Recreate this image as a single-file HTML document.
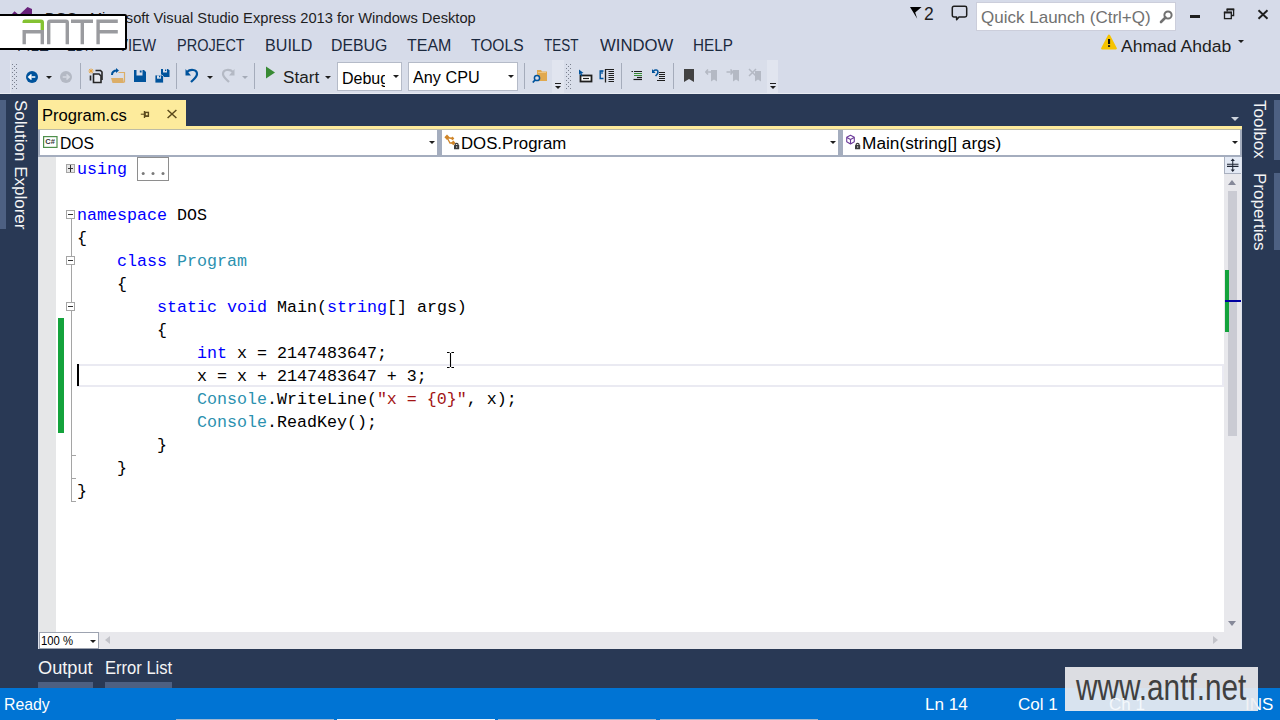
<!DOCTYPE html>
<html><head><meta charset="utf-8">
<style>
*{margin:0;padding:0;box-sizing:border-box}
html,body{width:1280px;height:720px;overflow:hidden;background:#D6DBE9;font-family:"Liberation Sans",sans-serif;position:relative}
.a{position:absolute;white-space:nowrap;line-height:1}
.t{font-size:15px;color:#1E1E1E}
.m{font-size:15px;color:#1B293E;top:39px}
.code{font-family:"Liberation Mono",monospace;font-size:16.67px;line-height:23px;color:#000;white-space:pre}
.kw{color:#0000FF}
.ty{color:#2B91AF}
.st{color:#A31515}
.sep{position:absolute;width:1px;background:#A5ACBB;top:63px;height:26px}
.dd{position:absolute;width:0;height:0;border-left:3px solid transparent;border-right:3px solid transparent;border-top:3px solid #1E1E1E}
.vt{position:absolute;font-size:16px;color:#F5F5F5;line-height:20px;transform-origin:0 0;transform:rotate(90deg);white-space:nowrap}
.ob{position:absolute;left:66px;width:9px;height:9px;border:1px solid #A5A5A5;background:#fff}
.ob:after{content:"";position:absolute;left:1px;top:3px;width:5px;height:1px;background:#333}
</style></head><body>

<!-- ===== TITLE BAR ===== -->
<svg class="a" style="left:10px;top:5px" width="24" height="24" viewBox="0 0 24 24"><path d="M2 9 L4.5 6.3 L9 10 L17.5 2 L22 4 L22 20 L17.5 22 L9 13 L4.5 17 L2 15 Z" fill="#68217A"/></svg>
<div class="a t" style="left:45px;top:11px;font-size:14.7px">DOS - Microsoft Visual Studio Express 2013 for Windows Desktop</div>

<!-- filter 2 -->
<svg class="a" style="left:909px;top:6px" width="14" height="14" viewBox="0 0 14 14"><path d="M1 1 H12.6 L6.2 6.4 L8.2 12.8 Z" fill="#000"/></svg>
<div class="a" style="left:924px;top:5.5px;font-size:17.5px;color:#1E1E1E">2</div>
<!-- feedback -->
<svg class="a" style="left:951px;top:5px" width="17" height="16" viewBox="0 0 17 16"><path d="M3 1.3 H14 Q15.7 1.3 15.7 3 V10.3 Q15.7 12 14 12 H8 L5.6 14.8 L5.6 12 H3 Q1.3 12 1.3 10.3 V3 Q1.3 1.3 3 1.3 Z" fill="none" stroke="#1E1E1E" stroke-width="1.5" stroke-linejoin="round"/></svg>
<!-- quick launch -->
<div class="a" style="left:976px;top:2px;width:200px;height:29px;background:#fff;border:1px solid #CCCEDB"></div>
<div class="a" style="left:981.23px;top:9.00px;font-size:17.39px;color:#717171;transform-origin:0 0;transform:scaleX(0.979);">Quick Launch (Ctrl+Q)</div>
<svg class="a" style="left:1158px;top:9px" width="16" height="16" viewBox="0 0 16 16"><circle cx="10" cy="6" r="3.6" fill="none" stroke="#717171" stroke-width="2"/><path d="M7.5 8.5 L3 13" stroke="#717171" stroke-width="2.6" stroke-linecap="round"/></svg>
<!-- window buttons -->
<div class="a" style="left:1190px;top:15px;width:10px;height:3px;background:#1E1E1E"></div>
<svg class="a" style="left:1223px;top:8px" width="12" height="12" viewBox="0 0 12 12"><path d="M4.2 3.5 V1.3 H10.6 V7.5 H8.2" fill="none" stroke="#1E1E1E" stroke-width="1.3"/><path d="M3.6 1.4 H11.2" stroke="#1E1E1E" stroke-width="1.9"/><rect x="1.5" y="4.4" width="6.8" height="6.2" fill="none" stroke="#1E1E1E" stroke-width="1.3"/><path d="M0.9 4.5 H8.9" stroke="#1E1E1E" stroke-width="1.9"/></svg>
<svg class="a" style="left:1256px;top:8px" width="14" height="13" viewBox="0 0 14 13"><path d="M2.5 2.2 L11.5 10.8 M11.5 2.2 L2.5 10.8" stroke="#1E1E1E" stroke-width="1.9"/></svg>

<!-- ===== MENU ===== -->
<div class="a" style="left:16.79px;top:37.00px;font-size:17.17px;color:#1B293E;transform-origin:0 0;transform:scaleX(0.878);">FILE</div>
<div class="a" style="left:66.97px;top:37.00px;font-size:17.17px;color:#1B293E;transform-origin:0 0;transform:scaleX(0.750);">EDIT</div>
<div class="a" style="left:117.93px;top:37.00px;font-size:17.17px;color:#1B293E;transform-origin:0 0;transform:scaleX(0.869);">VIEW</div>
<div class="a" style="left:177.24px;top:37.00px;font-size:17.17px;color:#1B293E;transform-origin:0 0;transform:scaleX(0.846);">PROJECT</div>
<div class="a" style="left:264.71px;top:37.00px;font-size:17.17px;color:#1B293E;transform-origin:0 0;transform:scaleX(0.939);">BUILD</div>
<div class="a" style="left:331.23px;top:37.00px;font-size:17.17px;color:#1B293E;transform-origin:0 0;transform:scaleX(0.923);">DEBUG</div>
<div class="a" style="left:407.18px;top:37.00px;font-size:17.17px;color:#1B293E;transform-origin:0 0;transform:scaleX(0.932);">TEAM</div>
<div class="a" style="left:471.09px;top:37.00px;font-size:17.17px;color:#1B293E;transform-origin:0 0;transform:scaleX(0.909);">TOOLS</div>
<div class="a" style="left:543.93px;top:37.00px;font-size:17.17px;color:#1B293E;transform-origin:0 0;transform:scaleX(0.785);">TEST</div>
<div class="a" style="left:599.92px;top:37.00px;font-size:17.17px;color:#1B293E;transform-origin:0 0;transform:scaleX(0.974);">WINDOW</div>
<div class="a" style="left:693.28px;top:37.00px;font-size:17.17px;color:#1B293E;transform-origin:0 0;transform:scaleX(0.890);">HELP</div>

<!-- user -->
<svg class="a" style="left:1100px;top:33px" width="18" height="18" viewBox="0 0 18 18"><path d="M9 2.6 L15.8 15.4 H2.2 Z" fill="#F6C300" stroke="#F6C300" stroke-width="2.2" stroke-linejoin="round"/><rect x="8" y="6" width="2.1" height="5" fill="#111"/><rect x="8" y="12.2" width="2.1" height="1.7" fill="#111"/></svg>
<div class="a" style="left:1121.00px;top:38.00px;font-size:17.10px;color:#1E1E1E;transform-origin:0 0;transform:scaleX(1.026);">Ahmad Ahdab</div>
<div class="dd" style="left:1238px;top:40px"></div>

<!-- ===== TOOLBAR ===== -->
<div class="a" style="left:10px;top:60px;width:542px;height:33px;background:#D9DEEA;border-left:1px solid #E4E7F0"></div>
<div class="a" style="left:552px;top:60px;width:12px;height:33px;background:#E1E5EF"></div>
<div class="a" style="left:564px;top:60px;width:203px;height:33px;background:#D9DEEA"></div>
<div class="a" style="left:767px;top:60px;width:11px;height:33px;background:#E1E5EF"></div>
<div class="a" style="left:0px;top:93px;width:1280px;height:1px;background:#E8EBF2"></div>
<svg class="a" style="left:12px;top:63px" width="6" height="27" viewBox="0 0 6 27"><rect x="0" y="1" width="1" height="1" fill="#7A808E"/><rect x="4" y="1" width="1" height="1" fill="#7A808E"/><rect x="2" y="3" width="1" height="1" fill="#7A808E"/><rect x="0" y="5" width="1" height="1" fill="#7A808E"/><rect x="4" y="5" width="1" height="1" fill="#7A808E"/><rect x="2" y="7" width="1" height="1" fill="#7A808E"/><rect x="0" y="9" width="1" height="1" fill="#7A808E"/><rect x="4" y="9" width="1" height="1" fill="#7A808E"/><rect x="2" y="11" width="1" height="1" fill="#7A808E"/><rect x="0" y="13" width="1" height="1" fill="#7A808E"/><rect x="4" y="13" width="1" height="1" fill="#7A808E"/><rect x="2" y="15" width="1" height="1" fill="#7A808E"/><rect x="0" y="17" width="1" height="1" fill="#7A808E"/><rect x="4" y="17" width="1" height="1" fill="#7A808E"/><rect x="2" y="19" width="1" height="1" fill="#7A808E"/><rect x="0" y="21" width="1" height="1" fill="#7A808E"/><rect x="4" y="21" width="1" height="1" fill="#7A808E"/><rect x="2" y="23" width="1" height="1" fill="#7A808E"/><rect x="0" y="25" width="1" height="1" fill="#7A808E"/><rect x="4" y="25" width="1" height="1" fill="#7A808E"/></svg>
<svg class="a" style="left:566px;top:63px" width="6" height="27" viewBox="0 0 6 27"><rect x="0" y="1" width="1" height="1" fill="#7A808E"/><rect x="4" y="1" width="1" height="1" fill="#7A808E"/><rect x="2" y="3" width="1" height="1" fill="#7A808E"/><rect x="0" y="5" width="1" height="1" fill="#7A808E"/><rect x="4" y="5" width="1" height="1" fill="#7A808E"/><rect x="2" y="7" width="1" height="1" fill="#7A808E"/><rect x="0" y="9" width="1" height="1" fill="#7A808E"/><rect x="4" y="9" width="1" height="1" fill="#7A808E"/><rect x="2" y="11" width="1" height="1" fill="#7A808E"/><rect x="0" y="13" width="1" height="1" fill="#7A808E"/><rect x="4" y="13" width="1" height="1" fill="#7A808E"/><rect x="2" y="15" width="1" height="1" fill="#7A808E"/><rect x="0" y="17" width="1" height="1" fill="#7A808E"/><rect x="4" y="17" width="1" height="1" fill="#7A808E"/><rect x="2" y="19" width="1" height="1" fill="#7A808E"/><rect x="0" y="21" width="1" height="1" fill="#7A808E"/><rect x="4" y="21" width="1" height="1" fill="#7A808E"/><rect x="2" y="23" width="1" height="1" fill="#7A808E"/><rect x="0" y="25" width="1" height="1" fill="#7A808E"/><rect x="4" y="25" width="1" height="1" fill="#7A808E"/></svg>
<!-- back/forward -->
<svg class="a" style="left:25px;top:70px" width="14" height="14" viewBox="0 0 14 14"><circle cx="7" cy="7" r="6" fill="#00539C"/><path d="M3.9 7 H10.3 M6.5 4.5 L3.9 7 L6.5 9.5" fill="none" stroke="#fff" stroke-width="1.7"/></svg>
<div class="dd" style="left:46px;top:76px"></div>
<svg class="a" style="left:59px;top:70px" width="14" height="14" viewBox="0 0 14 14"><circle cx="7" cy="7" r="6" fill="#B4B9C4"/><path d="M3.7 7 H10.1 M7.5 4.5 L10.1 7 L7.5 9.5" fill="none" stroke="#D5D9E2" stroke-width="1.7"/></svg>
<div class="sep" style="left:80px"></div>
<!-- new project -->
<svg class="a" style="left:88px;top:68px" width="16" height="16" viewBox="0 0 16 16">
<path d="M3 0.5 V5.5 M0.5 3 H5.5 M1.2 1.2 L4.8 4.8 M4.8 1.2 L1.2 4.8" stroke="#E8A33B" stroke-width="1"/>
<path d="M7.5 2.5 H12.5 L14 4 V12" fill="none" stroke="#252526" stroke-width="1.6"/>
<path d="M5.5 6 H11 L13 8 V14.5 H5.5 Z" fill="#E6E8EE" stroke="#252526" stroke-width="1.6"/>
<path d="M2.5 7.5 V12.5" stroke="#252526" stroke-width="1.6"/>
</svg>
<!-- open -->
<svg class="a" style="left:110px;top:68px" width="16" height="16" viewBox="0 0 16 16">
<path d="M8.5 4.5 H14.5 V14.5" fill="none" stroke="#DCAE68" stroke-width="1.2"/>
<path d="M1 10 H13 L14 15 H2.5 Z" fill="#DCAE68"/>
<path d="M2 7 C2 3.5 4 2.5 7 2.5" fill="none" stroke="#00539C" stroke-width="2"/>
<path d="M6 0 L9 2.5 L6 5 Z" fill="#00539C"/>
</svg>
<!-- save -->
<svg class="a" style="left:133px;top:69px" width="14" height="14" viewBox="0 0 14 14"><path d="M1 1 H11 L13 3 V13 H1 Z" fill="#00539C"/><rect x="3.5" y="1" width="6" height="5.5" fill="#D9DEEA"/><rect x="6.8" y="1.5" width="1.8" height="2" fill="#00539C"/></svg>
<!-- save all -->
<svg class="a" style="left:154px;top:68px" width="17" height="16" viewBox="0 0 17 16"><path d="M7 1 H14 L15.5 2.5 V9 H7 Z" fill="#00539C"/><rect x="9" y="1" width="4" height="3.5" fill="#D9DEEA"/><rect x="11" y="1.5" width="1.2" height="1.5" fill="#00539C"/><path d="M1 7 H8 L9.5 8.5 V15 H1 Z" fill="#00539C" stroke="#D9DEEA" stroke-width="0.8"/><rect x="3" y="7.4" width="4" height="3.3" fill="#D9DEEA"/><rect x="5" y="7.8" width="1.2" height="1.5" fill="#00539C"/></svg>
<div class="sep" style="left:176px"></div>
<!-- undo redo -->
<svg class="a" style="left:185px;top:68px" width="15" height="16" viewBox="0 0 15 16"><path d="M2 4 C5 1 12 1 12 6 C12 9 9 11 6 14" fill="none" stroke="#00539C" stroke-width="2.2"/><path d="M0.5 1 V7.5 H6 Z" fill="#00539C"/></svg>
<div class="dd" style="left:207px;top:76px"></div>
<svg class="a" style="left:220px;top:68px" width="15" height="16" viewBox="0 0 15 16"><path d="M13 4 C10 1 3 1 3 6 C3 9 6 11 9 14" fill="none" stroke="#B4B9C4" stroke-width="2.2"/><path d="M14.5 1 V7.5 H9 Z" fill="#B4B9C4"/></svg>
<div class="dd" style="left:242px;top:76px;border-top-color:#A5ABB7"></div>
<div class="sep" style="left:254px"></div>
<!-- start -->
<svg class="a" style="left:265px;top:66px" width="11" height="14" viewBox="0 0 11 14"><path d="M1 0.5 L10 6.5 L1 12.5 Z" fill="#388A34"/></svg>
<div class="a" style="left:282.73px;top:69.00px;font-size:17.03px;color:#1E1E1E;transform-origin:0 0;transform:scaleX(1.006);">Start</div>
<div class="dd" style="left:325px;top:76px"></div>
<!-- combos -->
<div class="a" style="left:337px;top:62px;width:65px;height:29px;background:#fff;border:1px solid #B5BBC8;overflow:hidden"><div class="a t" style="left:4px;top:8px;font-size:16px;color:#000">Debug</div><div class="a" style="left:47px;top:0;width:17px;height:27px;background:#fff"></div></div>
<div class="dd" style="left:393px;top:75px"></div>
<div class="a" style="left:408px;top:62px;width:110px;height:29px;background:#fff;border:1px solid #B5BBC8"></div>
<div class="a" style="left:412.50px;top:70.00px;font-size:16.67px;color:#000;transform-origin:0 0;transform:scaleX(0.974);">Any CPU</div>
<div class="dd" style="left:508px;top:75px"></div>
<div class="sep" style="left:524px"></div>
<!-- find in files -->
<svg class="a" style="left:532px;top:67px" width="17" height="17" viewBox="0 0 17 17"><path d="M5 3 H9 L10 4.5 H15 V14 H5 Z" fill="#E1A94E"/><rect x="6" y="5" width="8" height="1" fill="#F0C57E"/><circle cx="5" cy="11" r="2.6" fill="#D9DEEA" stroke="#00539C" stroke-width="1.5"/><path d="M3 13 L0.8 15.5" stroke="#00539C" stroke-width="1.8"/></svg>
<!-- overflow 1 -->
<div class="a" style="left:555px;top:83px;width:6px;height:1px;background:#1E1E1E"></div>
<div class="dd" style="left:555px;top:86px"></div>
<!-- text editor toolbar -->
<svg class="a" style="left:578px;top:69px" width="15" height="14" viewBox="0 0 15 14"><rect x="2.5" y="6.5" width="11" height="6" fill="#fff" stroke="#1E1E1E" stroke-width="1.8"/><path d="M5 9.5 H11" stroke="#1E1E1E" stroke-width="1.2"/><path d="M1 0.5 L5.5 4 L3.5 4.2 L4.5 6.5 L3 6.8 L2.2 4.6 L1 6 Z" fill="#00539C"/></svg>
<svg class="a" style="left:599px;top:68px" width="16" height="16" viewBox="0 0 16 16"><path d="M4.5 3 H1.2 V10.5 H4.5" fill="none" stroke="#00539C" stroke-width="1.4"/><path d="M3 2.5 V6" stroke="#00539C" stroke-width="1.2"/><path d="M6.5 1 V14.5" stroke="#1E1E1E" stroke-width="1.3"/><path d="M7 1.5 H15 M9.5 3.5 H15 M9.5 5.5 H15 M9.5 7.5 H15 M9.5 9.5 H15 M9.5 11.5 H15 M9.5 13.5 H15" stroke="#1E1E1E" stroke-width="1"/></svg>
<div class="sep" style="left:621px"></div>
<svg class="a" style="left:631px;top:69px" width="12" height="12" viewBox="0 0 12 12"><path d="M0.5 2.5 H2 M3 2.5 H11 M9 10.5 H3" stroke="#1E1E1E" stroke-width="1.2"/><path d="M3 4.5 H11 M3 6.5 H11" stroke="#388A34" stroke-width="1.2"/><path d="M6 8.5 H11" stroke="#1E1E1E" stroke-width="1.2"/><path d="M2.5 10.5 H11" stroke="#1E1E1E" stroke-width="1.2"/></svg>
<svg class="a" style="left:652px;top:69px" width="14" height="13" viewBox="0 0 14 13"><path d="M1.5 2 C3 0.5 6 0.5 6 3 C6 5 5 5.5 3.5 7" fill="none" stroke="#00539C" stroke-width="1.6"/><path d="M0 0 V4 H3.5 Z" fill="#00539C"/><path d="M7 3.5 H13 M7 5.5 H13 M7 7.5 H13 M7 9.5 H13 M5 11.5 H13" stroke="#1E1E1E" stroke-width="1.1"/></svg>
<div class="sep" style="left:673px"></div>
<svg class="a" style="left:683px;top:68px" width="12" height="15" viewBox="0 0 12 15"><path d="M1 1 H11 V14 L6 11 L1 14 Z" fill="#424242"/></svg>
<svg class="a" style="left:705px;top:69px" width="13" height="13" viewBox="0 0 13 13"><path d="M6 1 H12 V12.5 L9 10.5 L6 12.5 Z" fill="#B4B9C4"/><path d="M0.5 3 H7 M3 0.5 L0.8 3 L3 5.5" fill="none" stroke="#B4B9C4" stroke-width="1.6"/></svg>
<svg class="a" style="left:726px;top:69px" width="14" height="13" viewBox="0 0 14 13"><path d="M7 1 H13 V12.5 L10 10.5 L7 12.5 Z" fill="#B4B9C4"/><path d="M0.5 3 H7 M4.5 0.5 L6.8 3 L4.5 5.5" fill="none" stroke="#B4B9C4" stroke-width="1.6"/></svg>
<svg class="a" style="left:748px;top:68px" width="14" height="14" viewBox="0 0 14 14"><path d="M7 3 H13 V13.5 L10 11.5 L7 13.5 Z" fill="#B4B9C4"/><path d="M1 1 L8 8 M8 1 L1 8" stroke="#B4B9C4" stroke-width="1.5"/></svg>
<div class="a" style="left:770px;top:83px;width:6px;height:1px;background:#1E1E1E"></div>
<div class="dd" style="left:770px;top:86px"></div>

<!-- ===== DARK AREA ===== -->
<div class="a" style="left:0;top:94px;width:1280px;height:594px;background:#293955"></div>
<div class="a" style="left:0;top:100px;width:6px;height:129px;background:#4D6082"></div>
<div class="vt" style="left:30px;top:100px;font-size:17px">Solution Explorer</div>
<div class="a" style="left:1274px;top:100px;width:6px;height:60px;background:#4D6082"></div>
<div class="a" style="left:1274px;top:173px;width:6px;height:77px;background:#4D6082"></div>
<div class="vt" style="left:1269px;top:100px;font-size:17px">Toolbox</div>
<div class="vt" style="left:1269px;top:173px;font-size:17px">Properties</div>

<!-- tab -->
<div class="a" style="left:38px;top:100px;width:148px;height:30px;background:#FDEB9C"></div>
<div class="a" style="left:38px;top:126px;width:1204px;height:3px;background:#FDEB9C"></div>
<div class="a" style="left:41.67px;top:107.00px;font-size:16.23px;color:#000;transform-origin:0 0;transform:scaleX(1.023);">Program.cs</div>
<svg class="a" style="left:140px;top:110px" width="10" height="9" viewBox="0 0 10 9"><path d="M0.8 4.2 H4" stroke="#5C4B1C" stroke-width="1.1"/><path d="M4.5 1 V8" stroke="#5C4B1C" stroke-width="1.4"/><rect x="5.1" y="2.4" width="3.3" height="3.6" fill="none" stroke="#5C4B1C" stroke-width="1.4"/><path d="M5 6.3 H9" stroke="#5C4B1C" stroke-width="1.2"/></svg>
<svg class="a" style="left:166px;top:109px" width="12" height="10" viewBox="0 0 12 10"><path d="M1.6 1 L10.4 9 M10.4 1 L1.6 9" stroke="#5C4B1C" stroke-width="1.5"/></svg>
<div class="a" style="left:1231px;top:117px;width:0;height:0;border-left:4px solid transparent;border-right:4px solid transparent;border-top:4px solid #CED4DD"></div>

<!-- navbar -->
<div class="a" style="left:38px;top:130px;width:1204px;height:27px;background:#A4ADBE"></div>
<div class="a" style="left:38px;top:129px;width:1204px;height:1px;background:#BDBCA6"></div>
<div class="a" style="left:40px;top:130px;width:397px;height:25px;background:#fff"></div>
<div class="a" style="left:442px;top:130px;width:396px;height:25px;background:#fff"></div>
<div class="a" style="left:843px;top:130px;width:397px;height:25px;background:#fff"></div>
<svg class="a" style="left:43px;top:136px" width="15" height="12" viewBox="0 0 15 12"><rect x="0.6" y="0.6" width="13.4" height="10.8" fill="#fff" stroke="#4E8F4A" stroke-width="1.2"/><text x="2.3" y="8.3" font-family="Liberation Sans" font-size="7.5" font-weight="bold" fill="#333">C#</text></svg>
<div class="a" style="left:60.04px;top:135.00px;font-size:17.03px;color:#000;transform-origin:0 0;transform:scaleX(0.924);">DOS</div>
<div class="dd" style="left:429px;top:141px"></div>
<svg class="a" style="left:443px;top:133px" width="18" height="17" viewBox="0 0 18 17"><path d="M4 4.5 L7 10 L10.5 10 M4 4.5 L9.5 5.5" fill="none" stroke="#D08528" stroke-width="1.3"/><path d="M4 1.5 L6.6 4.2 L4 6.9 L1.4 4.2 Z" fill="#D08528"/><path d="M9.5 3.6 L11.3 5.4 L9.5 7.2 L7.7 5.4 Z" fill="#D08528"/><path d="M10.3 7.6 L12.6 9.9 L10.3 12.2 L8 9.9 Z" fill="#D08528"/><rect x="11" y="12" width="5.2" height="4.2" rx="0.5" fill="#3A3A3A"/><path d="M12.2 12.2 V11.2 Q13.6 9.4 15 11.2 V12.2" fill="none" stroke="#3A3A3A" stroke-width="1.2"/><rect x="13.2" y="13.4" width="1" height="1.2" fill="#fff"/></svg>
<div class="a" style="left:461.16px;top:135.00px;font-size:17.03px;color:#000;transform-origin:0 0;transform:scaleX(0.986);">DOS.Program</div>
<div class="dd" style="left:830px;top:141px"></div>
<svg class="a" style="left:845px;top:133px" width="17" height="17" viewBox="0 0 17 17"><path d="M5.5 2.3 L9.3 4.3 V8.7 L5.5 10.9 L1.7 8.7 V4.3 Z M1.9 4.5 L5.5 6.6 L9.1 4.5 M5.5 6.6 V10.7" fill="none" stroke="#6C3A99" stroke-width="1.1" stroke-linejoin="round"/><rect x="10" y="12" width="5.2" height="4.2" rx="0.5" fill="#3A3A3A"/><path d="M11.2 12.2 V11.2 Q12.6 9.4 14 11.2 V12.2" fill="none" stroke="#3A3A3A" stroke-width="1.2"/><rect x="12.2" y="13.4" width="1" height="1.2" fill="#fff"/></svg>
<div class="a" style="left:861.87px;top:135.00px;font-size:17.03px;color:#000;transform-origin:0 0;transform:scaleX(1.015);">Main(string[] args)</div>
<div class="dd" style="left:1232px;top:141px"></div>

<!-- ===== EDITOR ===== -->
<div class="a" style="left:38px;top:157px;width:1204px;height:492px;background:#E8E8EC;border-left:1px solid #DCE1EC"></div>
<div class="a" style="left:39px;top:157px;width:17px;height:475px;background:#E6E7E8"></div>
<div class="a" style="left:56px;top:157px;width:1168px;height:475px;background:#fff"></div>
<div class="a" style="left:1241px;top:157px;width:1px;height:492px;background:#DCE2EE"></div>
<!-- change bar -->
<div class="a" style="left:58px;top:318px;width:6px;height:115px;background:#14A33C"></div>
<!-- outline line -->
<div class="a" style="left:71px;top:219px;width:1px;height:282px;background:#A5A5A5"></div>
<div class="a" style="left:71px;top:455px;width:5px;height:1px;background:#A5A5A5"></div>
<div class="a" style="left:71px;top:478px;width:5px;height:1px;background:#A5A5A5"></div>
<div class="a" style="left:71px;top:501px;width:5px;height:1px;background:#A5A5A5"></div>
<div class="ob" style="top:164px;background:#E6E6E6"></div>
<div class="a" style="left:70px;top:165px;width:1px;height:7px;background:#333"></div>
<div class="ob" style="top:210px"></div>
<div class="ob" style="top:256px"></div>
<div class="ob" style="top:302px"></div>
<!-- current line -->
<div class="a" style="left:77px;top:364px;width:1147px;height:23px;border-top:2px solid #EAEAF2;border-bottom:2px solid #EAEAF2;border-right:2px solid #EAEAF2"></div>
<div class="a" style="left:77px;top:364px;width:2px;height:22px;background:#000"></div>
<!-- collapsed box -->
<div class="a" style="left:137px;top:157px;width:32px;height:24px;border:1px solid #8E8E8E;background:#fff"></div>
<svg class="a" style="left:137px;top:157px" width="32" height="24" viewBox="0 0 32 24"><circle cx="6.2" cy="16.5" r="1.5" fill="#7A7A7A"/><circle cx="16" cy="16.5" r="1.5" fill="#7A7A7A"/><circle cx="26" cy="16.5" r="1.5" fill="#7A7A7A"/></svg>

<div class="a code" style="left:77px;top:158px"><span class="kw">using</span>

<span class="kw">namespace</span> DOS
{
    <span class="kw">class</span> <span class="ty">Program</span>
    {
        <span class="kw">static</span> <span class="kw">void</span> Main(<span class="kw">string</span>[] args)
        {
            <span class="kw">int</span> x = 2147483647;
            x = x + 2147483647 + 3;
            <span class="ty">Console</span>.WriteLine(<span class="st">"x = {0}"</span>, x);
            <span class="ty">Console</span>.ReadKey();
        }
    }
}</div>
<!-- I-beam -->
<svg class="a" style="left:446px;top:351px" width="9" height="18" viewBox="0 0 9 18"><path d="M1 1.5 H3.6 M5.4 1.5 H8 M1 16.5 H3.6 M5.4 16.5 H8" stroke="#000" stroke-width="1.1"/><path d="M4.5 2 V16" stroke="#000" stroke-width="1.1"/></svg>

<!-- vertical scrollbar -->
<div class="a" style="left:1224px;top:157px;width:17px;height:17px;background:#E4EAF5;border-left:1px solid #A9B0BF;border-bottom:1px solid #A9B0BF"></div>
<svg class="a" style="left:1225px;top:157px" width="16" height="16" viewBox="0 0 16 16"><path d="M2 7.2 H13.5 M2 9.4 H13.5" stroke="#1E2433" stroke-width="1.1"/><path d="M7.75 3 V14" stroke="#1E2433" stroke-width="1"/><path d="M5.6 4 L7.75 1.6 L9.9 4 Z M5.6 12.6 L7.75 15 L9.9 12.6 Z" fill="#1E2433"/></svg>
<div class="a" style="left:1228px;top:180px;width:0;height:0;border-left:4.5px solid transparent;border-right:4.5px solid transparent;border-bottom:5px solid #868999"></div>
<div class="a" style="left:1228px;top:191px;width:9px;height:245px;background:#CACBD3"></div>
<div class="a" style="left:1225px;top:270px;width:4px;height:62px;background:#14A33C"></div>
<div class="a" style="left:1225px;top:300px;width:16px;height:2px;background:#0000A0"></div>
<div class="a" style="left:1228px;top:621px;width:0;height:0;border-left:4.5px solid transparent;border-right:4.5px solid transparent;border-top:5px solid #868999"></div>

<!-- horizontal scrollbar -->
<div class="a" style="left:39px;top:632px;width:60px;height:17px;background:#fff;border:1px solid #9DA3B0"></div>
<div class="a" style="left:40.85px;top:636.00px;font-size:11.88px;color:#000;transform-origin:0 0;transform:scaleX(0.954);">100 %</div>
<div class="dd" style="left:90px;top:640px"></div>
<div class="a" style="left:105px;top:636px;width:0;height:0;border-top:4.5px solid transparent;border-bottom:4.5px solid transparent;border-right:5px solid #C2C3C9"></div>
<div class="a" style="left:1213px;top:636px;width:0;height:0;border-top:4.5px solid transparent;border-bottom:4.5px solid transparent;border-left:5px solid #C2C3C9"></div>

<!-- bottom tabs -->
<div class="a" style="left:37.93px;top:660.00px;font-size:17.75px;color:#F5F5F5;transform-origin:0 0;transform:scaleX(1.026);">Output</div>
<div class="a" style="left:104.68px;top:660.00px;font-size:17.75px;color:#F5F5F5;transform-origin:0 0;transform:scaleX(0.933);">Error List</div>
<div class="a" style="left:38px;top:682px;width:55px;height:6px;background:#4D6082"></div>
<div class="a" style="left:105px;top:682px;width:67px;height:6px;background:#4D6082"></div>

<!-- ===== STATUS BAR ===== -->
<div class="a" style="left:0;top:688px;width:1280px;height:32px;background:#0074D4"></div>
<div class="a" style="left:3.73px;top:696.00px;font-size:17.39px;color:#fff;transform-origin:0 0;transform:scaleX(0.911);">Ready</div>
<div class="a" style="left:924.63px;top:697.00px;font-size:16.81px;color:#fff;transform-origin:0 0;transform:scaleX(1.020);">Ln 14</div>
<div class="a" style="left:1017.55px;top:697.00px;font-size:16.81px;color:#fff;transform-origin:0 0;transform:scaleX(1.014);">Col 1</div>
<div class="a" style="left:1245.47px;top:697.00px;font-size:16.81px;color:#fff;transform-origin:0 0;transform:scaleX(1.011);">INS</div>
<div class="a" style="left:176px;top:719px;width:158px;height:1px;background:#9FB6D0"></div>
<div class="a" style="left:337px;top:719px;width:158px;height:1px;background:#EEF2F6"></div>
<div class="a" style="left:498px;top:719px;width:158px;height:1px;background:#9FB6D0"></div>
<div class="a" style="left:660px;top:719px;width:158px;height:1px;background:#9FB6D0"></div>

<!-- watermark -->
<div class="a" style="left:1064.5px;top:667px;width:193px;height:44px;background:rgba(240,240,242,0.9)"></div>
<div class="a" style="left:1076px;top:670px;font-size:36.5px;color:#404040;transform-origin:0 0;transform:scaleX(0.815)">www.antf.net</div>

<div class="a" style="left:1108.85px;top:697.00px;font-size:16.81px;color:#F4F8FC;transform-origin:0 0;transform:scaleX(1.013);">Ch 1</div>
<!-- ===== ANTF LOGO ===== -->
<div class="a" style="left:-3px;top:14px;width:130px;height:36px;background:#fff;border:2.7px solid #000;border-radius:2px"></div>
<svg class="a" style="left:0;top:14px" width="126" height="35" viewBox="0 14 126 35">
<path d="M22.5 22.9 V21.5 Q22.5 19.5 25 19.5 H41 Q44 19.5 44 22.5 V30 H40.6 V22.9 Z" fill="#84C232"/>
<path d="M22.5 30 H44 V44.3 H40.6 V33.4 H25.9 V44.3 H22.5 Z" fill="#9A9B9F"/>
<path d="M47 44.3 V22.5 Q47 19.5 50 19.5 H66 Q69 19.5 69 22.5 V44.3 H65.6 V22.9 H50.4 V44.3 Z" fill="#9A9B9F"/>
<path d="M71 19.5 H93 V22.9 H84 V44.3 H80.6 V22.9 H71 Z" fill="#9A9B9F"/>
<path d="M96.4 19.5 H117.8 V22.9 H99.8 V30 H117.8 V33.4 H99.8 V44.3 H96.4 Z" fill="#9A9B9F"/>
</svg>
</body></html>
